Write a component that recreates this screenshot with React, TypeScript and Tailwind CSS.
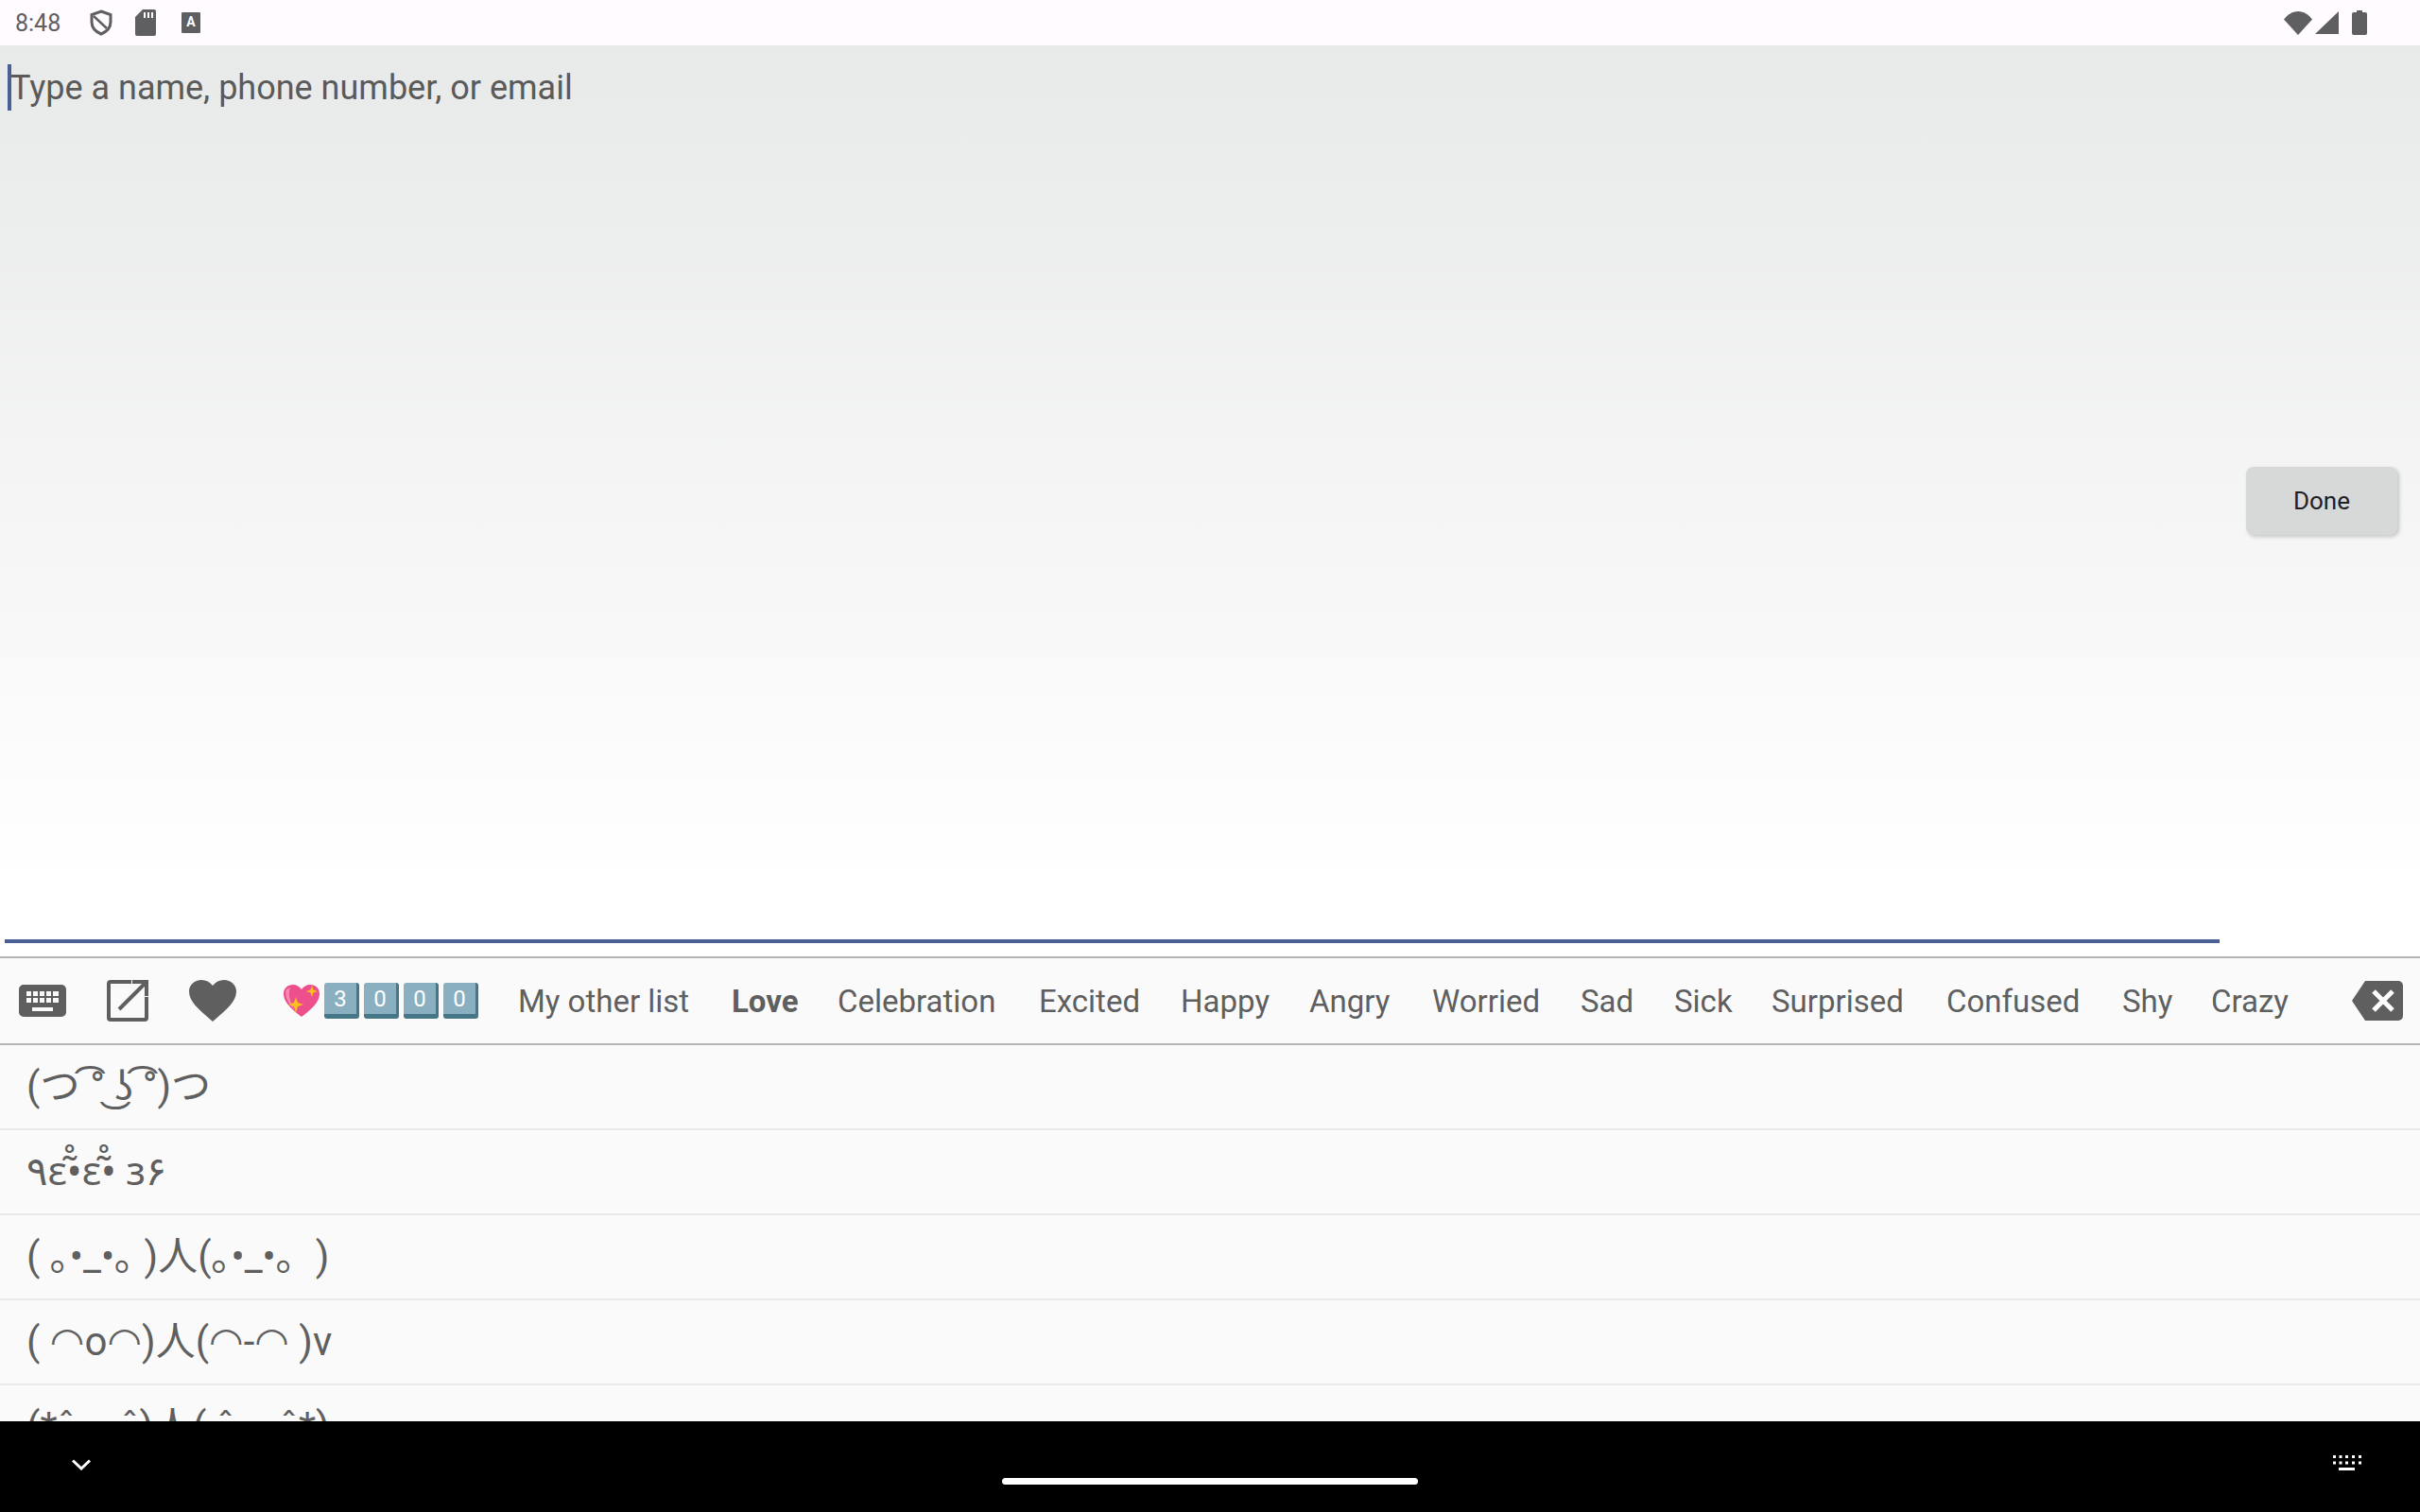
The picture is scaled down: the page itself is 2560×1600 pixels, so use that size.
import React from 'react';

const categories = [
  { name: 'My other list', w: 'w-[226px]' },
  { name: 'Love', bold: true, w: 'w-[112px]' },
  { name: 'Celebration', w: 'w-[213px]' },
  { name: 'Excited', w: 'w-[150px]' },
  { name: 'Happy', w: 'w-[136px]' },
  { name: 'Angry', w: 'w-[130px]' },
  { name: 'Worried', w: 'w-[157px]' },
  { name: 'Sad', w: 'w-[99px]' },
  { name: 'Sick', w: 'w-[103px]' },
  { name: 'Surprised', w: 'w-[185px]' },
  { name: 'Confused', w: 'w-[186px]' },
  { name: 'Shy', w: 'w-[94px]' },
  { name: 'Crazy', w: 'w-[125px]' },
];

const kaomoji = [
  '(つ ͡° ͜ʖ ͡°)つ',
  '٩ɛ•̃̊ɛ•̃̊ ɜ۶',
  '( ｡•_•｡ )人(｡•_•｡  )',
  '( ◠o◠)人(◠-◠ )v',
  '(*ˆ ᴗ ˆ)人( ˆ ᴗ ˆ*)',
];

const Keycap = ({ digit }: { digit: string }) => (
  <div className="w-[37px] h-[38px] rounded-[3px] bg-[#8aafc0] border-b-[5px] border-r-[3px] border-[#457786] flex items-center justify-center text-white text-[24px] leading-none">
    {digit}
  </div>
);

const StatusBar = () => (
  <div className="h-12 shrink-0 bg-[#fffbff] flex items-center text-[#5f5e60]">
    <span className="ml-4 w-[79px] text-[25px] leading-none">8:48</span>
    <svg width="24" height="28" viewBox="0 0 24 28" fill="none" stroke="currentColor" strokeWidth="3">
      <path d="M12 2 22 5.500V13c0 6-4 10.500-10 13C6 23.500 2 19 2 13V5.500Z" />
      <path d="M4 7 18 20" strokeWidth="2.500" />
    </svg>
    <svg className="ml-[24px]" width="22" height="28" viewBox="0 0 22 28" fill="currentColor">
      <path d="M8 0h12a2 2 0 0 1 2 2v24a2 2 0 0 1-2 2H2a2 2 0 0 1-2-2V8Z" />
      <path d="M9 3h2v6H9ZM13 3h2v6h-2ZM17 3h2v6h-2Z" fill="#fffbff" />
    </svg>
    <div className="ml-[27px] w-5 h-[22px] bg-[#5f5e60] rounded-[1px] flex items-center justify-center text-[#fffbff] text-[14px] font-bold leading-none pb-[3px]">
      A
    </div>
    <div className="ml-auto flex items-center">
      <svg width="30" height="25" viewBox="0 0 30 25" fill="currentColor">
        <path d="M0 8.500C4 3.500 9 0 15 0s11 3.500 15 8.500L15 25Z" />
      </svg>
      <svg className="ml-[3px]" width="25" height="24" viewBox="0 0 25 24" fill="currentColor">
        <path d="M25 0v24H0Z" />
      </svg>
      <svg className="ml-[14px] mr-[56px]" width="16" height="26" viewBox="0 0 16 26" fill="currentColor">
        <path d="M5 0h6v2h3a2 2 0 0 1 2 2v20a2 2 0 0 1-2 2H2a2 2 0 0 1-2-2V4a2 2 0 0 1 2-2h3Z" />
      </svg>
    </div>
  </div>
);

const Toolbar = () => (
  <div className="h-[90px] shrink-0 bg-[#fafafa] border-y-2 border-[#b5b5b5] flex items-center text-[#5f5f5f] box-content">
    <svg className="ml-5" width="50" height="34" viewBox="0 0 50 34" fill="currentColor">
      <path fillRule="evenodd" d="M5 0h40a5 5 0 0 1 5 5v24a5 5 0 0 1-5 5H5a5 5 0 0 1-5-5V5a5 5 0 0 1 5-5ZM8 7v5h5V7Zm7 0v5h5V7Zm7 0v5h5V7Zm7 0v5h5V7Zm7 0v5h6V7ZM8 14v5h5v-5Zm7 0v5h5v-5Zm7 0v5h5v-5Zm7 0v5h5v-5Zm7 0v5h6v-5ZM14 24v4h22v-4Z" />
    </svg>
    <svg className="ml-[43px]" width="44" height="44" viewBox="0 0 44 44" fill="none" stroke="currentColor" strokeWidth="4">
      <path d="M26 2H4a2 2 0 0 0-2 2v36a2 2 0 0 0 2 2h36a2 2 0 0 0 2-2V18" />
      <path d="M13 31 41 3M27 2h15v15" />
    </svg>
    <svg className="ml-[43px]" width="50" height="44" viewBox="0 0 50 44" fill="currentColor">
      <path d="M25 44C10 31 0 23 0 12 0 5 6 0 13 0c5 0 9 2 12 6 3-4 7-6 12-6 7 0 13 5 13 12 0 11-10 19-25 32Z" />
    </svg>
    <svg className="ml-[50px]" width="38" height="34" viewBox="0 0 38 34">
      <path d="M19 34C7 25 0 18 0 9.500 0 4 4 0 10 0c4 0 7 2 9 5 2-3 5-5 9-5 6 0 10 4 10 9.500C38 18 31 25 19 34Z" fill="#ec4f8b" />
      <path d="M3 5C1 10 3 18 12 27 7 18 4 11 7 3Z" fill="#f58ab2" />
      <path d="M13 13l2 6 6 2-6 2-2 7-2-7-6-2 6-2ZM30 1l1.500 4.500 4.500 1.500-4.500 1.500L30 13l-1.500-4.500L24 7l4.500-1.500Z" fill="#fcc21b" />
    </svg>
    <div className="ml-[5px] mr-[42px] flex gap-[5px]">
      {['3', '0', '0', '0'].map((d, i) => (
        <Keycap key={i} digit={d} />
      ))}
    </div>
    {categories.map((c) => (
      <span key={c.name} className={`${c.w} shrink-0 text-[33px] leading-none whitespace-nowrap ${c.bold ? 'font-bold' : ''}`}>
        {c.name}
      </span>
    ))}
    <svg className="ml-auto mr-[18px]" width="54" height="42" viewBox="0 0 54 42" fill="currentColor">
      <path fillRule="evenodd" d="M14 0h35a5 5 0 0 1 5 5v32a5 5 0 0 1-5 5H14L0 21Z" />
      <path d="M23 11 43 31M43 11 23 31" stroke="#fff" strokeWidth="5" fill="none" />
    </svg>
  </div>
);

const App: React.FC = () => {
  return (
    <div className="w-[2560px] h-[1600px] flex flex-col overflow-hidden bg-white font-['Roboto',sans-serif]">
      <StatusBar />

      <div className="h-[964px] shrink-0 flex bg-gradient-to-b from-[#e8e9e9] to-white to-[92%]">
        <div className="w-[2343px] ml-[5px] flex flex-col border-b-4 border-[#4a5f96] mb-[14px]">
          <div className="flex items-center mt-5 h-[49px] text-[#5a5a5a] text-[36px] leading-none">
            <span className="w-1 h-[49px] ml-[3px] -mr-[1px] bg-[#4a5f96]" />
            Type a name, phone number, or email
          </div>
        </div>
        <button className="ml-[28px] mt-[446px] w-40 h-[72px] rounded-lg bg-[#d7d8d8] shadow-[2px_2px_4px_rgba(0,0,0,0.2)] text-[#1f2023] text-[26px]">
          Done
        </button>
      </div>

      <Toolbar />

      <div className="h-[400px] flex-1 overflow-hidden bg-[#fafafa] text-[#5f5f5f]">
        {kaomoji.map((k) => (
          <div key={k} className="h-[90px] pl-[28px] border-b-2 border-[#e9e9e9] flex items-center whitespace-pre text-[42px] leading-none font-['Roboto','Noto_Sans','DejaVu_Sans','Noto_Sans_CJK_JP',sans-serif]">
            {k}
          </div>
        ))}
      </div>

      <div className="h-24 shrink-0 bg-black relative flex items-center">
        <svg className="ml-[76px] mb-[4px]" width="20" height="12" viewBox="0 0 20 12" fill="none" stroke="#fff" strokeWidth="3">
          <path d="M1 1.500 10 10 19 1.500" />
        </svg>
        <div className="absolute left-[1060px] top-[60px] w-[440px] h-[7px] rounded-full bg-white" />
        <svg className="ml-auto mr-[62px] mb-[4px]" width="30" height="20" viewBox="0 0 30 20" fill="#fff">
          <path d="M0 0h3v3H0ZM6.500 0h3v3h-3ZM13 0h3v3h-3ZM20 0h3v3h-3ZM27 0h3v3h-3ZM0 6.500h3v3H0ZM6.500 6.500h3v3h-3ZM13 6.500h3v3h-3ZM20 6.500h3v3h-3ZM27 6.500h3v3h-3ZM6 13h17v3H6Z" />
        </svg>
      </div>
    </div>
  );
};

export default App;
